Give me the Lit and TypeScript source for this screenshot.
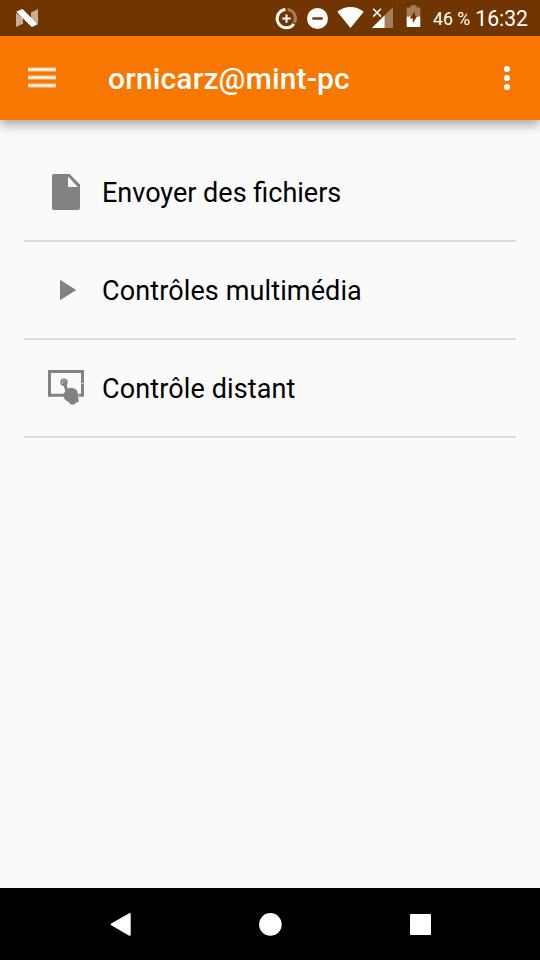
import { LitElement, html, css, svg } from "lit";
import { customElement } from "lit/decorators.js";

const fileIcon = svg`<svg viewBox="40 165 52 54" width="52" height="54">
  <path fill="#828282" fill-rule="evenodd" d="M54 174H69.6L80 184.4V208a2 2 0 0 1-2 2H54a2 2 0 0 1-2-2V176a2 2 0 0 1 2-2ZM68 176.6V187H77.8Z"/></svg>`;
const playIcon = svg`<svg viewBox="40 263 52 54" width="52" height="54">
  <path fill="#828282" d="M60 279.8L76.3 290L60 300.3Z"/></svg>`;
const remoteIcon = svg`<svg viewBox="40 361 52 54" width="52" height="54">
  <path fill="none" stroke="#828282" stroke-width="3" d="M64 395.2H49.5V371.5H82.5V395.2H78.5"/>
  <circle cx="82.5" cy="383.5" r=".8" fill="#fafafa"/>
  <circle cx="64" cy="382.2" r="2.8" fill="none" stroke="#828282" stroke-width="1.8"/>
  <path fill="#828282" d="M62.5 382a1.6 1.6 0 0 1 3.1-.4L67.8 388.4C70 387.2 73.5 387.4 76 389.4C77.8 390.9 78 393 78 395.5L78.8 402L75.8 402.6L74.8 404.6H70.6L69 402.6L65 399.4C63.6 397.8 63.2 396.2 63.6 393.8L65.3 391.2Z"/></svg>`;

const actions = [
  { label: "Envoyer des fichiers", icon: fileIcon, size: "" },
  { label: "Contrôles multimédia", icon: playIcon, size: "wide" },
  { label: "Contrôle distant", icon: remoteIcon, size: "wide" },
];

@customElement("app-root")
export class AppRoot extends LitElement {
  static styles = css`
    :host {
      display: flex;
      flex-direction: column;
      width: 540px;
      height: 960px;
      overflow: hidden;
      background: #fafafa;
      color: #000;
      font-family: Roboto, "Noto Sans", sans-serif;
    }
    svg { display: block; flex: none; }
    .status {
      flex: none;
      display: flex;
      height: 36px;
      background: #703500;
      color: #fff;
    }
    .system { display: flex; margin-left: auto; padding-right: 12px; }
    .battery { width: 37px; font-size: 17.7px; line-height: 38px; margin-left: 7px; white-space: pre; }
    .clock { width: 53px; font-size: 21.2px; line-height: 38px; margin-left: 5px; text-align: right; }
    .toolbar {
      flex: none;
      display: flex;
      align-items: center;
      height: 84px;
      background: #f77700;
      color: #fff;
      box-shadow: 0 5px 10px rgba(0, 0, 0, 0.32);
      z-index: 1;
    }
    .title {
      flex: 1;
      margin: 2px 0 0 48px;
      font-size: 30px;
      font-weight: 500;
      line-height: 36px;
      letter-spacing: 0.14px;
    }
    .list { flex: 1; margin: 0; padding: 24px 24px 0; list-style: none; }
    .row {
      display: flex;
      align-items: center;
      height: 96px;
      padding-left: 16px;
      border-bottom: 2px solid #dcdcdc;
    }
    .label { margin-left: 10px; font-size: 27px; line-height: 34px; padding-top: 1px; }
    .wide { letter-spacing: 0.12px; }
    .nav {
      flex: none;
      display: flex;
      justify-content: space-between;
      height: 72px;
      padding: 0 95px;
      background: #000;
    }
  `;

  render() {
    return html`
      <header class="status">
        <svg viewBox="0 0 54 36" width="54" height="36">
          <path fill="#c7ad97" d="M16 13L23 18V23.7L16 27ZM31 12.4L38 9V24L31 18.5Z"/>
          <path fill="#fff" d="M16.3 11.8L21.6 9.2Q22.4 9 23 9.6L37.7 24.2L32.6 26.8Q31.8 27 31.2 26.5Z"/>
        </svg>
        <div class="system">
          <svg viewBox="274 0 26 36" width="26" height="36">
            <g fill="none" stroke-width="3">
              <path stroke="#a37d5c" d="M287.6 9.6A9 9 0 0 1 294.5 22.6"/>
              <path stroke="#fff" d="M285.4 9.6A9.1 9.1 0 1 0 293.8 23.8"/>
            </g>
            <path fill="none" stroke="#fff" stroke-width="2" d="M282.3 18.6H290.7M286.5 14.4V22.8"/>
          </svg>
          <svg viewBox="300 0 34 36" width="34" height="36">
            <circle cx="317.5" cy="18.5" r="10.5" fill="#fff"/>
            <path fill="#703500" d="M312.3 17.3H322.7V19.7H312.3Z"/>
          </svg>
          <svg viewBox="334 0 34 36" width="34" height="36">
            <path fill="#fff" d="M337.3 11.8Q343 7 350.5 7T363.7 11.8L350.5 27.9Z"/>
          </svg>
          <svg viewBox="368 0 32 36" width="32" height="36">
            <path fill="#a37d5c" d="M384.7 15.3L393 7V28H384.7Z"/>
            <path fill="#fff" d="M371.8 28L384.7 15.3V28Z"/>
            <path fill="none" stroke="#fff" stroke-width="1.5" d="M373.2 8.8L381 16.6M381 8.8L373.2 16.6"/>
          </svg>
          <svg viewBox="400 0 26 36" width="26" height="36">
            <path fill="#a37d5c" d="M410.5 5.3H416.5V7.6H420.3V16.5H406.7V7.6H410.5Z"/>
            <path fill="#fff" d="M406.7 16.5H420.3V26.2Q420.3 27 419.5 27H407.5Q406.7 27 406.7 26.2Z"/>
            <path fill="#703500" d="M415 11L409.8 18.4H412.8V23.2L417.4 15.8H415Z"/>
          </svg>
          <span class="battery">46 %</span>
          <span class="clock">16:32</span>
        </div>
      </header>
      <header class="toolbar">
        <svg viewBox="0 36 60 84" width="60" height="84">
          <path fill="#fff" fill-opacity=".32" d="M28 67H56V72H28ZM28 75H56V80H28ZM28 83H56V88H28Z"/>
          <path fill="#fff" fill-opacity=".6" d="M28 68H56V71H28ZM28 76H56V79H28ZM28 84H56V87H28Z"/>
          <path fill="#fff" d="M28 69H56V70H28ZM28 77H56V78H28ZM28 85H56V86H28Z"/>
        </svg>
        <div class="title">ornicarz@mint-pc</div>
        <svg viewBox="480 36 60 84" width="60" height="84">
          <g fill="#fff"><circle cx="507" cy="69" r="3.1"/><circle cx="507" cy="78" r="3.1"/><circle cx="507" cy="87" r="3.1"/></g>
        </svg>
      </header>
      <ul class="list">
        ${actions.map((a) => html`<li class="row">${a.icon}<span class="label ${a.size}">${a.label}</span></li>`)}
      </ul>
      <nav class="nav">
        <svg viewBox="95 888 50 72" width="50" height="72">
          <path fill="#fff" stroke="#fff" stroke-width="2" stroke-linejoin="round" d="M111.7 924.4L129.7 914V934.8Z"/>
        </svg>
        <svg viewBox="245 888 50 72" width="50" height="72"><circle cx="270.4" cy="924.4" r="11.3" fill="#fff"/></svg>
        <svg viewBox="395 888 50 72" width="50" height="72"><rect x="410" y="914" width="21" height="21" rx="1" fill="#fff"/></svg>
      </nav>
    `;
  }
}
